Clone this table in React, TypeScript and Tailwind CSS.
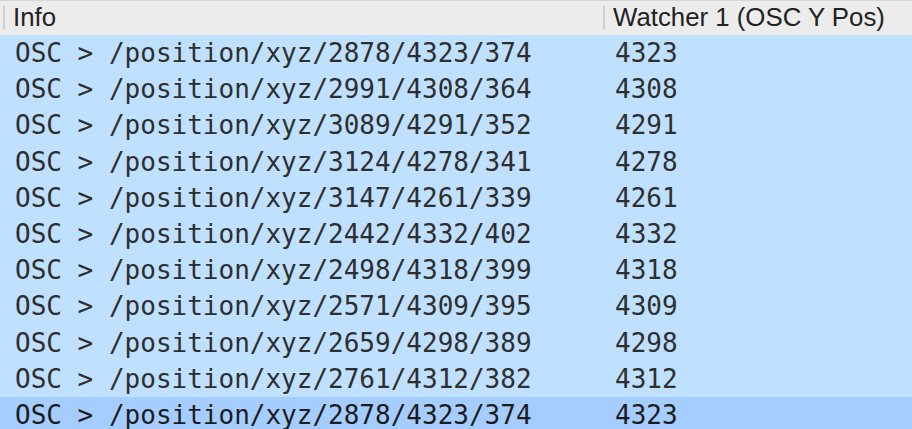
import * as React from "react";

const rows: { info: string; y: string }[] = [
    { info: "OSC > /position/xyz/2878/4323/374", y: "4323" },
    { info: "OSC > /position/xyz/2991/4308/364", y: "4308" },
    { info: "OSC > /position/xyz/3089/4291/352", y: "4291" },
    { info: "OSC > /position/xyz/3124/4278/341", y: "4278" },
    { info: "OSC > /position/xyz/3147/4261/339", y: "4261" },
    { info: "OSC > /position/xyz/2442/4332/402", y: "4332" },
    { info: "OSC > /position/xyz/2498/4318/399", y: "4318" },
    { info: "OSC > /position/xyz/2571/4309/395", y: "4309" },
    { info: "OSC > /position/xyz/2659/4298/389", y: "4298" },
    { info: "OSC > /position/xyz/2761/4312/382", y: "4312" },
    { info: "OSC > /position/xyz/2878/4323/374", y: "4323" },
];

const HeaderCell: React.FC<{ label: string; className?: string }> = ({
    label,
    className,
}) => (
    <div className={`flex items-center h-full ${className ?? ""}`}>
        <div className="w-[2px] h-[25px] bg-[#cfcfcf] mt-[-2px]" />
        <span className="pl-[8px] pb-[1px]">{label}</span>
    </div>
);

export default function App() {
    return (
        <div className="w-[912px] h-[429px] overflow-hidden bg-[#bfe0fe]">
            <div className="h-[35px] bg-[#ececec] border-t border-[#d6d6d6] flex text-[25.8px] text-[#222] font-['Liberation_Sans',sans-serif] leading-none">
                <HeaderCell label="Info" className="w-[603px] pl-[3px]" />
                <HeaderCell label="Watcher 1 (OSC Y Pos)" className="flex-1" />
            </div>
            <div className="font-['DejaVu_Sans_Mono',monospace] text-[26px] leading-none text-[#2e2e2e]">
                {rows.map((r, i) => (
                    <div
                        key={i}
                        className={`h-[36.2px] flex items-center ${
                            i === rows.length - 1
                                ? "bg-[#a5cdff] text-[#1c1c1c]"
                                : "bg-[#bfe0fe]"
                        }`}
                    >
                        <div className="w-[600px] pl-[15px] whitespace-pre">
                            {r.info}
                        </div>
                        <div className="pl-[15px]">{r.y}</div>
                    </div>
                ))}
            </div>
        </div>
    );
}
